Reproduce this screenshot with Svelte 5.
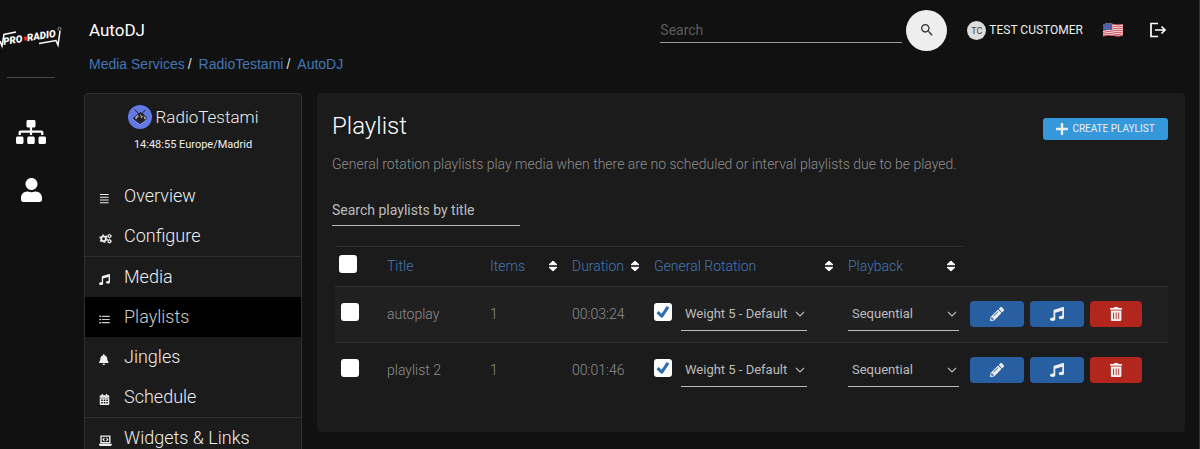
<!--
  AutoDJ playlists page: icon rail, station menu and the playlist table.
-->
<script lang="ts">
  interface MenuItem {
    label: string;
    icon: string;
    active?: boolean;
  }

  interface Playlist {
    title: string;
    items: number;
    duration: string;
    selected: boolean;
    rotation: boolean;
    weight: string;
    playback: string;
  }

  const crumbs = ['Media Services', 'RadioTestami', 'AutoDJ'];

  const menu: MenuItem[][] = [
    [
      { label: 'Overview', icon: 'bars' },
      { label: 'Configure', icon: 'cogs' },
    ],
    [
      { label: 'Media', icon: 'music' },
      { label: 'Playlists', icon: 'list', active: true },
      { label: 'Jingles', icon: 'bell' },
      { label: 'Schedule', icon: 'calendar' },
    ],
    [{ label: 'Widgets & Links', icon: 'laptop' }],
  ];

  const columns = [
    { label: 'Title', sortable: false },
    { label: 'Items', sortable: true },
    { label: 'Duration', sortable: true },
    { label: 'General Rotation', sortable: true },
    { label: 'Playback', sortable: true },
  ];

  const weights = ['Weight 1 - Low', 'Weight 5 - Default', 'Weight 10 - High'];
  const playbacks = ['Sequential', 'Shuffled', 'Random'];

  let playlists: Playlist[] = $state([
    { title: 'autoplay', items: 1, duration: '00:03:24', selected: false, rotation: true, weight: weights[1], playback: playbacks[0] },
    { title: 'playlist 2', items: 1, duration: '00:01:46', selected: false, rotation: true, weight: weights[1], playback: playbacks[0] },
  ]);

  let query = $state('');
  let titleFilter = $state('');

  const visible = $derived(
    playlists.filter((p) => p.title.toLowerCase().includes(titleFilter.toLowerCase())),
  );
  const allSelected = $derived(playlists.every((p) => p.selected));

  function toggleAll() {
    const next = !allSelected;
    for (const p of playlists) p.selected = next;
  }
</script>

{#snippet icon(name: string)}
  {#if name === 'bars'}
    <svg viewBox="0 0 12 12" aria-hidden="true"><path d="M1 1.700h9.500M1 4.700h9.500M1 7.700h9.500M1 10.700h9.500" stroke="currentColor" stroke-width="1.200" /></svg>
  {:else if name === 'cogs'}
    <svg viewBox="0 0 14 12" aria-hidden="true">
      <g fill="none" stroke="currentColor">
        <circle cx="5" cy="6.200" r="2.600" stroke-width="2" />
        <circle cx="5" cy="6.200" r="4" stroke-width="1.400" stroke-dasharray="2 2.190" />
        <circle cx="11.400" cy="3.400" r="1.500" stroke-width="1.200" />
        <circle cx="11.400" cy="9" r="1.500" stroke-width="1.200" />
        <circle cx="11.400" cy="3.400" r="2.200" stroke-width=".7" stroke-dasharray="1.100 1.200" />
        <circle cx="11.400" cy="9" r="2.200" stroke-width=".7" stroke-dasharray="1.100 1.200" />
      </g>
    </svg>
  {:else if name === 'music'}
    <svg viewBox="0 0 512 512" aria-hidden="true"><path fill="currentColor" d="M470.380 1.510L150.410 96A32 32 0 0 0 128 126.510v261.410A139 139 0 0 0 96 384c-53 0-96 28.660-96 64s43 64 96 64 96-28.660 96-64V214.320l256-75v184.610a138.400 138.400 0 0 0-32-3.930c-53 0-96 28.660-96 64s43 64 96 64 96-28.650 96-64V32a32 32 0 0 0-41.620-30.490z" /></svg>
  {:else if name === 'list'}
    <svg viewBox="0 0 12 12" aria-hidden="true">
      <path d="M3 2.500h8.700M3 6h8.700M3 9.500h8.700" stroke="currentColor" stroke-width="1.300" />
      <path d="M.3 2.500h1.800M.3 6h1.800M.3 9.500h1.800" stroke="currentColor" stroke-width="1.800" />
    </svg>
  {:else if name === 'bell'}
    <svg viewBox="0 0 448 512" aria-hidden="true"><path fill="currentColor" d="M224 512c35.320 0 63.970-28.650 63.970-64H160.030c0 35.350 28.650 64 63.970 64zm215.390-149.710c-19.320-20.760-55.470-51.990-55.470-154.290 0-77.700-54.480-139.900-127.940-155.160V32c0-17.670-14.320-32-31.980-32s-31.980 14.330-31.980 32v20.840C118.560 68.100 64.080 130.300 64.080 208c0 102.300-36.150 133.530-55.470 154.290-6 6.450-8.660 14.160-8.610 21.710.11 16.400 12.980 32 32.100 32h383.800c19.120 0 32-15.600 32.100-32 .05-7.550-2.610-15.270-8.610-21.710z" /></svg>
  {:else if name === 'calendar'}
    <svg viewBox="0 0 12 12" aria-hidden="true"><path fill="currentColor" fill-rule="evenodd" d="M3 0h1.500v1.400h3V0H9v1.400h1.200q1 0 1 1V4H.8V2.400q0-1 1-1H3zM.8 4.700h10.400V11q0 1-1 1H1.800q-1 0-1-1zM2.400 6v1.500h1.700V6zm2.800 0v1.500h1.700V6zM8 6v1.500h1.700V6zM2.400 8.800v1.500h1.700V8.800zm2.800 0v1.500h1.700V8.800zM8 8.800v1.500h1.700V8.800z" /></svg>
  {:else if name === 'laptop'}
    <svg viewBox="0 0 14 12" aria-hidden="true">
      <path fill="none" stroke="currentColor" stroke-width="1.500" d="M2.200 8.500V1.200h9.600v7.300z" />
      <path fill="none" stroke="currentColor" stroke-width="1.200" d="M6 3.200L4.400 4.900 6 6.600M8 3.200l1.600 1.700L8 6.600" />
      <path fill="currentColor" d="M0 9.600h14v.8q0 1.500-1.400 1.500H1.400Q0 11.900 0 10.400z" />
    </svg>
  {:else if name === 'pencil'}
    <svg viewBox="0 0 512 512" aria-hidden="true"><path fill="currentColor" fill-rule="evenodd" d="M497.900 142.100l-46.100 46.100c-4.700 4.700-12.300 4.700-17 0l-111-111c-4.700-4.700-4.700-12.300 0-17l46.100-46.100c18.700-18.700 49.100-18.700 67.900 0l60.100 60.100c18.800 18.700 18.800 49.100 0 67.900zM284.200 99.800L21.600 362.400.4 483.900c-2.900 16.400 11.400 30.600 27.800 27.800l121.500-21.300 262.600-262.600c4.700-4.700 4.700-12.300 0-17l-111-111c-4.800-4.700-12.400-4.700-17.100 0zM124.100 339.900c-5.500-5.500-5.500-14.300 0-19.800l154-154c5.500-5.500 14.300-5.500 19.800 0s5.500 14.300 0 19.800l-154 154c-5.500 5.500-14.300 5.500-19.800 0zM88 424h48v36.300l-64.500 11.300-31.100-31.100L51.700 376H88v48z" /></svg>
  {:else if name === 'trash'}
    <svg viewBox="0 0 448 512" aria-hidden="true"><path fill="currentColor" d="M32 464a48 48 0 0 0 48 48h288a48 48 0 0 0 48-48V128H32zm272-256a16 16 0 0 1 32 0v224a16 16 0 0 1-32 0zm-96 0a16 16 0 0 1 32 0v224a16 16 0 0 1-32 0zm-96 0a16 16 0 0 1 32 0v224a16 16 0 0 1-32 0zM432 32H312l-9.400-18.700A24 24 0 0 0 281.100 0H166.800a23.720 23.720 0 0 0-21.400 13.300L136 32H16A16 16 0 0 0 0 48v32a16 16 0 0 0 16 16h416a16 16 0 0 0 16-16V48a16 16 0 0 0-16-16z" /></svg>
  {:else if name === 'plus'}
    <svg viewBox="0 0 12 12" aria-hidden="true"><path d="M6 .9v10.200M.9 6h10.200" stroke="currentColor" stroke-width="2.400" stroke-linecap="round" /></svg>
  {:else if name === 'sort'}
    <svg viewBox="0 0 10 12" aria-hidden="true"><path fill="currentColor" stroke="currentColor" stroke-width="1" stroke-linejoin="round" d="M5 1L9 4.700H1zM5 11L1 7.300h8z" /></svg>
  {:else if name === 'chevron'}
    <svg viewBox="0 0 10 10" aria-hidden="true"><path fill="none" stroke="currentColor" stroke-width="1.100" d="M1 3l4 4 4-4" /></svg>
  {/if}
{/snippet}

{#snippet check()}
  <svg class="tick" viewBox="0 0 18 18" aria-hidden="true"><path fill="none" stroke="#2d6cb5" stroke-width="3" stroke-linejoin="round" d="M3.500 9.200l4.300 4L14 3.800" /></svg>
{/snippet}

<div class="app">
  <nav class="rail" aria-label="Main">
    <a class="logo" href="#home" aria-label="Pro Radio">
      <svg viewBox="0 0 62 24" width="62" height="24">
        <g fill="none" stroke="#fff" stroke-width="1.500">
          <path d="M0 16l2 5 2-11.500 12-2.500" />
          <path d="M39 18.500l17-3 2 4.500 2-14" />
          <circle cx="59.500" cy="4" r="1.600" stroke="#aaa" stroke-width=".8" />
        </g>
        <g transform="rotate(-9 4 21)" font-family="Roboto, sans-serif" font-size="10" font-weight="900" font-style="italic" fill="#fff">
          <text x="4" y="20">PRO</text>
          <text x="28" y="20">RADIO</text>
          <rect x="25" y="15" width="3" height="4" fill="#e02c2c" />
        </g>
      </svg>
    </a>
    <hr />
    <a class="rail-link" href="#services" aria-label="Services">
      <svg viewBox="0 0 640 512" width="30" height="24"><path fill="currentColor" d="M128 352H32c-17.670 0-32 14.330-32 32v96c0 17.670 14.330 32 32 32h96c17.670 0 32-14.330 32-32v-96c0-17.670-14.330-32-32-32zm-24-80h192v48h48v-48h192v48h48v-57.590c0-21.170-17.230-38.410-38.410-38.410H344v-64h40c17.670 0 32-14.330 32-32V32c0-17.670-14.330-32-32-32H256c-17.670 0-32 14.330-32 32v96c0 17.670 14.330 32 32 32h40v64H94.410C73.230 224 56 241.230 56 262.410V320h48v-48zm264 80h-96c-17.670 0-32 14.330-32 32v96c0 17.670 14.330 32 32 32h96c17.670 0 32-14.330 32-32v-96c0-17.670-14.330-32-32-32zm240 0h-96c-17.670 0-32 14.330-32 32v96c0 17.670 14.330 32 32 32h96c17.670 0 32-14.330 32-32v-96c0-17.670-14.330-32-32-32z" /></svg>
    </a>
    <a class="rail-link" href="#account" aria-label="Account">
      <svg viewBox="0 0 448 512" width="21" height="24"><path fill="currentColor" d="M224 256c70.700 0 128-57.300 128-128S294.700 0 224 0 96 57.300 96 128s57.300 128 128 128zm89.600 32h-16.700c-22.200 10.200-46.900 16-72.900 16s-50.600-5.800-72.900-16h-16.700C60.200 288 0 348.200 0 422.400V464c0 26.500 21.500 48 48 48h352c26.500 0 48-21.500 48-48v-41.600c0-74.200-60.200-134.400-134.400-134.400z" /></svg>
    </a>
  </nav>

  <div class="page">
    <header class="topbar">
      <h1>AutoDJ</h1>
      <form class="search" role="search" onsubmit={(e) => e.preventDefault()}>
        <input type="search" placeholder="Search" aria-label="Search" bind:value={query} />
        <button type="submit" aria-label="Search">
          <svg viewBox="0 0 24 24" width="16" height="16"><path fill="currentColor" d="M15.500 14h-.79l-.28-.27C15.410 12.590 16 11.110 16 9.500 16 5.910 13.090 3 9.500 3S3 5.910 3 9.500 5.910 16 9.500 16c1.610 0 3.090-.59 4.230-1.570l.27.28v.79l5 4.990L20.490 19l-4.990-5zm-6 0C7.010 14 5 11.990 5 9.500S7.010 5 9.500 5 14 7.010 14 9.500 11.990 14 9.500 14z" /></svg>
        </button>
      </form>
      <a class="customer" href="#profile"><span class="avatar">TC</span>TEST CUSTOMER</a>
      <button class="flag" type="button" aria-label="Language">
        <svg viewBox="0 0 20 14" width="20" height="14">
          <path fill="#f3e9ea" d="M0 1.500q5-2 10-.5t10 0v11.500q-5 1.500-10 0t-10 .8z" />
          <path fill="none" stroke="#d0505c" stroke-width="1" d="M0 1.900q5-2 10-.5t10 0M0 3.800q5-2 10-.5t10 0M0 5.700q5-2 10-.5t10 0M0 7.600q5-2 10-.5t10 0M0 9.500q5-2 10-.5t10 0M0 11.400q5-2 10-.5t10 0M0 13q5-1.600 10-.5t10 0" />
          <path fill="#46589c" d="M0 1.500q4.500-1.800 9-.8V7q-4.500-1-9 .7z" />
          <path fill="none" stroke="#aeb8dc" stroke-width=".6" stroke-dasharray=".6 1.200" d="M1 2.800q4-1.400 7.500-.7M1 4.500q4-1.400 7.500-.7M1 6.200q4-1.400 7.500-.7" />
        </svg>
      </button>
      <button type="button" aria-label="Log out">
        <svg viewBox="0 0 18 16" width="18" height="16"><path fill="none" stroke="#fff" stroke-width="1.700" d="M9 1.500H2v13h7M6 8h10M12.500 4.500L16 8l-3.500 3.500" /></svg>
      </button>
    </header>

    <nav class="crumbs" aria-label="Breadcrumb">
      {#each crumbs as crumb, i}
        {#if i > 0}<span>/</span>{/if}
        <a href="#{crumb}">{crumb}</a>
      {/each}
    </nav>

    <div class="columns">
      <aside class="card side">
        <div class="station">
          <svg viewBox="0 0 24 24" width="24" height="24" aria-hidden="true">
            <circle cx="12" cy="12" r="12" fill="#6479e4" />
            <path fill="#22242e" d="M5 13l4-3.500L12.500 7l3 2L19 13l-1.500 2.500L12 19.500 6 15z" />
            <path fill="none" stroke="#22242e" d="M6.500 4.500L12 10M14 9l3-4" />
            <path fill="#b6b2a4" d="M7 12.500l3-3 .5 2L8 14.500zM12 9l3 3-2 1zM15.500 10.500l3 3-2 1z" />
            <path fill="none" stroke="#8da0f0" stroke-width=".8" d="M5 14.500L12 19.700l6.500-4.300" />
          </svg>
          <h2>RadioTestami</h2>
        </div>
        <p class="clock">14:48:55 Europe/Madrid</p>
        {#each menu as group}
          <ul>
            {#each group as item}
              <li>
                <a href="#{item.label}" class:active={item.active} aria-current={item.active ? 'page' : undefined}>
                  <span class="menu-icon">{@render icon(item.icon)}</span>{item.label}
                </a>
              </li>
            {/each}
          </ul>
        {/each}
      </aside>

      <main class="card panel">
        <div class="panel-head">
          <h2>Playlist</h2>
          <button class="create" type="button">{@render icon('plus')}CREATE PLAYLIST</button>
        </div>
        <p class="hint">
          General rotation playlists play media when there are no scheduled or interval playlists due to be played.
        </p>
        <input class="filter" type="text" placeholder="Search playlists by title" aria-label="Search playlists by title" bind:value={titleFilter} />

        <table>
          <colgroup>
            <col class="c-check" />
            <col class="c-title" />
            <col class="c-num" />
            <col class="c-num" />
            <col class="c-rotation" />
            <col class="c-playback" />
            <col />
          </colgroup>
          <thead>
            <tr>
              <th class="pick">
                <label class="box"><input type="checkbox" aria-label="Select all" checked={allSelected} onchange={toggleAll} />{#if allSelected}{@render check()}{/if}</label>
              </th>
              {#each columns as col}
                <th scope="col">
                  <div class="col-head">
                    <a href="#sort">{col.label}</a>
                    {#if col.sortable}{@render icon('sort')}{/if}
                  </div>
                </th>
              {/each}
              <td></td>
            </tr>
          </thead>
          <tbody>
            {#each visible as row (row.title)}
              <tr>
                <td class="pick">
                  <label class="box"><input type="checkbox" aria-label="Select {row.title}" bind:checked={row.selected} />{#if row.selected}{@render check()}{/if}</label>
                </td>
                <td>{row.title}</td>
                <td>{row.items}</td>
                <td>{row.duration}</td>
                <td>
                  <div class="rotation">
                    <label class="box"><input type="checkbox" aria-label="General rotation" bind:checked={row.rotation} />{#if row.rotation}{@render check()}{/if}</label>
                    <div class="select">
                      <select aria-label="Weight" bind:value={row.weight}>
                        {#each weights as w}<option>{w}</option>{/each}
                      </select>
                      {@render icon('chevron')}
                    </div>
                  </div>
                </td>
                <td>
                  <div class="select">
                    <select aria-label="Playback" bind:value={row.playback}>
                      {#each playbacks as p}<option>{p}</option>{/each}
                    </select>
                    {@render icon('chevron')}
                  </div>
                </td>
                <td>
                  <div class="actions">
                    <button type="button" aria-label="Edit">{@render icon('pencil')}</button>
                    <button type="button" aria-label="Media">{@render icon('music')}</button>
                    <button type="button" class="danger" aria-label="Delete">{@render icon('trash')}</button>
                  </div>
                </td>
              </tr>
            {/each}
          </tbody>
        </table>
      </main>
    </div>
  </div>
</div>

<style>
  :global(body) {
    background: #111;
  }
  .app {
    --line: #303030;
    --link: #4377b4;
    display: flex;
    height: 100vh;
    overflow: hidden;
    box-sizing: border-box;
    border-right: 1px solid #333;
    background: #111;
    color: #eee;
    font: 14px/20px Roboto, sans-serif;
  }
  .app :global(*) {
    box-sizing: border-box;
  }
  h1, h2, p, ul {
    margin: 0;
    padding: 0;
    font-weight: 300;
  }
  ul { list-style: none; }
  a { text-decoration: none; color: inherit; }
  svg { display: block; }
  button, input, select {
    margin: 0;
    padding: 0;
    border: 0;
    border-radius: 0;
    font: inherit;
    color: inherit;
    background: none;
    appearance: none;
  }

  .rail {
    flex: none;
    width: 62px;
    padding-top: 25px;
    display: flex;
    flex-direction: column;
    align-items: center;
  }
  .rail hr {
    width: 48px;
    margin: 28px 0 42px;
    border: 0;
    border-top: 1px solid #484848;
  }
  .rail-link {
    color: #fff;
    margin-bottom: 34px;
  }

  .page {
    flex: 1;
    min-width: 0;
    padding: 8px 14px 0 22px;
  }
  .topbar {
    display: flex;
    align-items: center;
    height: 44px;
    padding: 0 18px 0 5px;
  }
  h1 {
    font-size: 17px;
    font-weight: 400;
    color: #fff;
    margin-right: auto;
  }
  .search {
    display: flex;
    align-items: center;
    gap: 4px;
    margin-right: 20px;
  }
  .search input {
    width: 242px;
    height: 26px;
    border-bottom: 1px solid #999;
  }
  .search input::placeholder { color: #5c5c5c; opacity: 1; }
  .search button {
    width: 41px;
    height: 41px;
    border-radius: 50%;
    background: #eee;
    color: #333;
    display: grid;
    place-items: center;
  }
  .customer {
    display: flex;
    align-items: center;
    gap: 3px;
    font-size: 12px;
    margin-right: 20px;
  }
  .avatar {
    width: 19px;
    height: 19px;
    border-radius: 50%;
    background: #ddd;
    color: #444;
    font-size: 9px;
    line-height: 20px;
    text-align: center;
  }
  .flag { margin-right: 26px; }

  .crumbs {
    display: flex;
    gap: 3px;
    padding: 2px 5px 0;
    font: 14px/20px "Liberation Sans", sans-serif;
  }
  .crumbs a { color: var(--link); }
  .crumbs span { padding-right: 4px; color: #ddd; }

  .columns {
    display: flex;
    align-items: flex-start;
    gap: 15px;
    margin-top: 19px;
  }
  .card {
    background: #1b1b1b;
    border-radius: 4px;
  }
  .side {
    flex: none;
    width: 218px;
    border: 1px solid var(--line);
  }
  .station {
    display: flex;
    justify-content: center;
    align-items: center;
    gap: 4px;
    padding-top: 11px;
  }
  .station h2 {
    font-size: 17px;
    line-height: 24px;
  }
  .clock {
    font-size: 11px;
    font-weight: 400;
    text-align: center;
    margin: 6px 0 21px;
  }
  .side ul + ul { border-top: 1px solid var(--line); }
  .side li a {
    display: flex;
    align-items: center;
    height: 40px;
    padding: 0 14px;
    font-size: 18px;
    font-weight: 300;
  }
  .side li a.active { background: #000; color: #ccc; }
  .menu-icon {
    width: 25px;
    padding-top: 4px;
  }
  .menu-icon :global(svg) { height: 11px; }

  .panel {
    flex: 1;
    min-width: 0;
    padding: 16px 17px 33px 15px;
  }
  .panel-head {
    display: flex;
    align-items: center;
    justify-content: space-between;
  }
  .panel-head h2 {
    font-size: 24px;
    line-height: 34px;
    color: #fff;
  }
  .create {
    display: flex;
    align-items: center;
    justify-content: center;
    gap: 4px;
    width: 125px;
    height: 22px;
    margin-top: 6px;
    border-radius: 3px;
    background: #3498db;
    font-size: 10px;
  }
  .create :global(svg) { width: 12px; height: 12px; }
  .hint {
    margin-top: 11px;
    color: #8e8e8e;
    font-weight: 300;
  }
  .filter {
    display: block;
    width: 188px;
    height: 32px;
    margin-top: 20px;
    border-bottom: 1px solid #bbb;
  }
  .filter::placeholder { color: #bbb; opacity: 1; }

  table {
    width: calc(100% - 3px);
    margin: 20px 0 0 3px;
    table-layout: fixed;
    border-collapse: collapse;
    color: #8e8e8e;
    font-weight: 300;
  }
  .c-check { width: 45px; }
  .c-title { width: 103px; }
  .c-num { width: 82px; }
  .c-rotation { width: 194px; }
  .c-playback { width: 122px; }
  th {
    height: 40px;
    padding: 0 7px 2px;
    border-top: 1px solid var(--line);
    font-weight: 300;
    text-align: left;
  }
  .col-head {
    display: flex;
    align-items: center;
    justify-content: space-between;
    color: #fff;
  }
  .col-head a { color: var(--link); }
  .col-head :global(svg) { width: 10px; height: 12px; }
  tbody td {
    height: 56px;
    padding: 0 7px 1px;
    border-top: 1px solid var(--line);
  }
  tbody tr:nth-child(odd) { background: #202020; }
  th.pick { padding: 0 0 6px 4px; }
  td.pick { padding: 0 0 6px 6px; }
  .box {
    display: grid;
    width: 18px;
    height: 18px;
  }
  .box input, .box .tick { grid-area: 1 / 1; }
  .box input {
    width: 18px;
    height: 18px;
    border-radius: 3px;
    background: #fff;
  }
  .box .tick {
    width: 18px;
    height: 18px;
    pointer-events: none;
  }
  .rotation {
    display: flex;
    align-items: center;
    gap: 9px;
  }
  .rotation .box { margin-bottom: 4px; }
  .rotation .select { width: 126px; }
  .select {
    display: grid;
    align-items: center;
    width: 111px;
  }
  .select select, .select :global(svg) { grid-area: 1 / 1; }
  .select select {
    height: 33px;
    padding: 0 4px;
    border-bottom: 1px solid #bbb;
    color: #bbb;
    font-size: 13px;
    font-weight: 400;
  }
  .select :global(svg) {
    width: 10px;
    height: 10px;
    margin-right: 2px;
    justify-self: end;
    color: #bbb;
    pointer-events: none;
  }
  .actions {
    display: flex;
    gap: 6px;
  }
  .actions button {
    display: grid;
    place-items: center;
    width: 54px;
    height: 26px;
    border-radius: 4px;
    background: #285fa3;
    color: #eee;
  }
  .actions button.danger {
    width: 52px;
    background: #b3261e;
  }
  .actions :global(svg) { height: 14px; }
</style>
